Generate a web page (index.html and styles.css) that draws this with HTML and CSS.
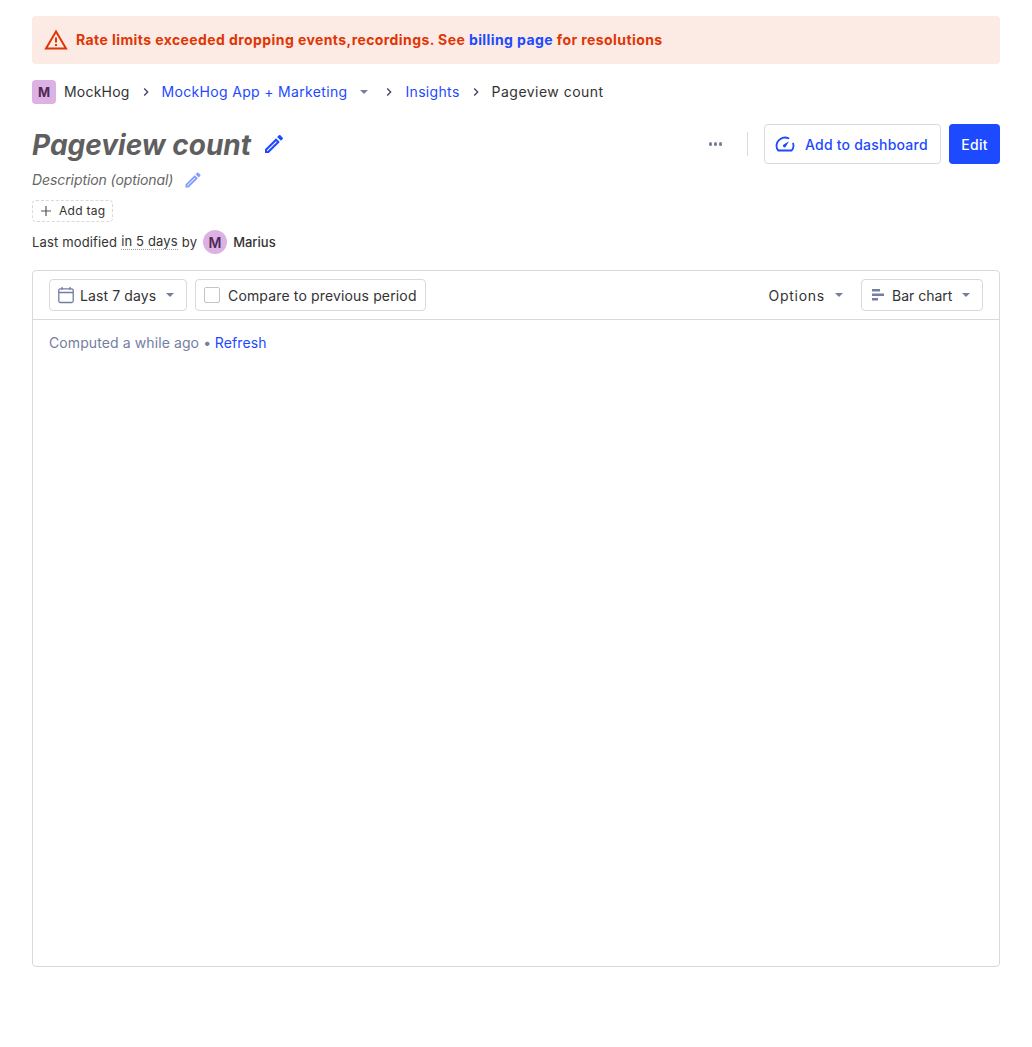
FILE: index.html
```html
<!DOCTYPE html>
<html lang="en">
<head>
    <meta charset="UTF-8">
    <meta name="viewport" content="width=device-width, initial-scale=1.0">
    <title>Pageview count</title>
    <link rel="stylesheet" href="styles.css">
</head>
<body>
    <div class="page">
        <div class="alert">
            <svg class="alert-icon" width="24" height="24" viewBox="0 0 24 24"><path d="M12 3.500 2 20.500h20z" fill="none" stroke="#e03505" stroke-width="2" stroke-linejoin="miter"/><path d="M12 9.500v5M12 16v2" fill="none" stroke="#e03505" stroke-width="2"/></svg>
            <span class="alert-text">Rate limits exceeded dropping events,recordings. See <a class="link" href="#">billing page</a> for resolutions</span>
        </div>

        <div class="breadcrumbs">
            <span class="org-badge">M</span>
            <span class="crumb crumb-org">MockHog</span>
            <svg class="chevron" width="16" height="16" viewBox="0 0 16 16"><path d="M6.200 4.500 9.700 8l-3.500 3.500" fill="none" stroke="#3b4263" stroke-width="1.300"/></svg>
            <a class="crumb link" href="#">MockHog App + Marketing</a>
            <span class="caret caret-crumb"></span>
            <svg class="chevron" width="16" height="16" viewBox="0 0 16 16"><path d="M6.200 4.500 9.700 8l-3.500 3.500" fill="none" stroke="#3b4263" stroke-width="1.300"/></svg>
            <a class="crumb link" href="#">Insights</a>
            <svg class="chevron" width="16" height="16" viewBox="0 0 16 16"><path d="M6.200 4.500 9.700 8l-3.500 3.500" fill="none" stroke="#3b4263" stroke-width="1.300"/></svg>
            <span class="crumb crumb-last">Pageview count</span>
        </div>

        <div class="title-row">
            <div class="title-left">
                <h1>Pageview count</h1>
                <svg class="edit-icon" width="24" height="24" viewBox="0 0 24 24"><path d="M3 17.250V21h3.750L17.810 9.940l-3.750-3.750zM20.710 7.040a1 1 0 0 0 0-1.410l-2.340-2.340a1 1 0 0 0-1.410 0l-1.830 1.830 3.750 3.750z" fill="#1d4aff"/><path d="M5 18.300 14.100 9.200l.7.700L5.700 19H5z" fill="#fff"/></svg>
            </div>
            <div class="title-actions">
                <span class="more-dots"><i></i><i></i><i></i></span>
                <span class="divider"></span>
                <button class="btn btn-outline">
                    <svg width="20" height="20" viewBox="0 0 20 20"><path d="M13.500 4.300A8.500 8.500 0 0 0 1.500 12c0 1.700.6 3.300 1.800 4.500h13.400a7.500 7.500 0 0 0 1.800-4.500c0-.9-.1-1.700-.4-2.500" fill="none" stroke="#1d4aff" stroke-width="1.800" stroke-linejoin="round" stroke-linecap="round"/><path d="M8.300 10.800 14 7.200l-3.300 5.600a1.500 1.500 0 1 1-2.400-2z" fill="#1d4aff"/></svg>
                    <span>Add to dashboard</span>
                </button>
                <button class="btn btn-primary">Edit</button>
            </div>
        </div>

        <div class="description">
            <span>Description (optional)</span>
            <svg class="edit-icon-small" width="20" height="20" viewBox="0 0 24 24"><path d="M3 17.250V21h3.750L17.810 9.940l-3.750-3.750zM20.710 7.040a1 1 0 0 0 0-1.410l-2.340-2.340a1 1 0 0 0-1.410 0l-1.830 1.830 3.750 3.750z" fill="#1d4aff"/><path d="M5 18.300 14.100 9.200l.7.700L5.700 19H5z" fill="#fff"/></svg>
        </div>

        <div class="tag-row">
            <span class="add-tag">
                <svg width="14" height="14" viewBox="0 0 14 14"><path d="M7 2v10M2 7h10" fill="none" stroke="#555" stroke-width="1.200"/></svg>
                <span>Add tag</span>
            </span>
        </div>

        <div class="modified">
            <span>Last modified</span>
            <span class="dotted">in 5 days</span>
            <span>by</span>
            <span class="avatar">M</span>
            <span class="author">Marius</span>
        </div>

        <div class="card">
            <div class="card-top">
                <div class="filters">
                    <div class="select select-date">
                        <svg width="18" height="18" viewBox="0 0 18 18"><rect x="1.800" y="2.800" width="14.400" height="13.700" rx="1.500" fill="none" stroke="#747ea1" stroke-width="1.300"/><path d="M1.800 6.500h14.400M5 1v3M13 1v3" fill="none" stroke="#747ea1" stroke-width="1.300"/></svg>
                        <span>Last 7 days</span>
                        <span class="caret"></span>
                    </div>
                    <label class="select select-compare">
                        <span class="checkbox"></span>
                        <span>Compare to previous period</span>
                    </label>
                </div>
                <div class="filters">
                    <div class="options">
                        <span>Options</span>
                        <span class="caret"></span>
                    </div>
                    <div class="select select-chart">
                        <svg width="16" height="16" viewBox="0 0 16 16"><path d="M2 2h8v2.500H2zM2 6.500h12V9H2zM2 11h6v2.500H2z" fill="#747ea1"/></svg>
                        <span>Bar chart</span>
                        <span class="caret"></span>
                    </div>
                </div>
            </div>
            <div class="card-body">
                <span class="computed">Computed a while ago</span>
                <span class="computed bullet">•</span>
                <a class="link" href="#">Refresh</a>
            </div>
        </div>
    </div>
</body>
</html>
```

FILE: styles.css
```css
* {
    box-sizing: border-box;
}

body {
    margin: 0;
    background-color: #fff;
    color: #333;
    font-family: Inter, "Liberation Sans", sans-serif;
    font-size: 14px;
}

.page {
    padding: 16px 32px 80px;
}

.link {
    color: #1d4aff;
    text-decoration: none;
}

.alert {
    display: flex;
    align-items: center;
    gap: 8px;
    height: 48px;
    padding: 0 12px;
    background-color: #fcebe4;
    border-radius: 4px;
    color: #e03505;
    font-weight: 700;
}

.alert-text {
    padding-bottom: 2px;
    letter-spacing: 0.415px;
}

.breadcrumbs {
    display: flex;
    align-items: center;
    height: 24px;
    margin-top: 16px;
}

.org-badge {
    display: flex;
    align-items: center;
    justify-content: center;
    width: 24px;
    height: 24px;
    border-radius: 4px;
    background-color: #dcb1e3;
    color: #4e2a58;
    font-size: 13px;
    font-weight: 700;
}

.crumb {
    padding-bottom: 2px;
    letter-spacing: 0.33px;
}

.crumb-org {
    margin-left: 8px;
    letter-spacing: 0.2px;
}

.crumb-last {
    letter-spacing: 0.47px;
}

.chevron {
    margin: 0 8px;
}

.caret {
    width: 0;
    height: 0;
    border-left: 4px solid transparent;
    border-right: 4px solid transparent;
    border-top: 4px solid #747ea1;
}

.caret-crumb {
    margin-left: 13px;
    margin-right: 5px;
}

.title-row {
    display: flex;
    justify-content: space-between;
    align-items: center;
    height: 40px;
    margin-top: 20px;
}

.title-left {
    display: flex;
    align-items: center;
    gap: 11px;
}

h1 {
    margin: 0;
    padding-top: 1px;
    color: #5f5f5f;
    font-size: 28px;
    font-style: italic;
    font-weight: 700;
    line-height: 40px;
}

.title-actions {
    display: flex;
    align-items: center;
}

.more-dots {
    display: flex;
    gap: 1.500px;
    margin-right: 25px;
}

.more-dots i {
    width: 3.500px;
    height: 3.500px;
    border-radius: 50%;
    background-color: #747ea1;
}

.divider {
    width: 1px;
    height: 24px;
    background-color: #d9d9d9;
    margin-right: 16px;
}

.btn {
    display: flex;
    align-items: center;
    height: 40px;
    border-radius: 4px;
    font-family: inherit;
    font-size: 14px;
    font-weight: 500;
    letter-spacing: 0.27px;
}

.btn-outline {
    gap: 10px;
    width: 177px;
    padding: 0 12px 0 10px;
    border: 1px solid #d9d9d9;
    background-color: #fff;
    color: #1d4aff;
    letter-spacing: 0.22px;
}

.btn-primary {
    justify-content: center;
    width: 51px;
    margin-left: 8px;
    border: none;
    background-color: #1d4aff;
    color: #fff;
}

.description {
    display: flex;
    align-items: center;
    gap: 10px;
    height: 20px;
    margin-top: 6px;
    color: #666;
    font-style: italic;
    letter-spacing: -0.09px;
}

.description span {
    padding-bottom: 2px;
}

.edit-icon-small {
    opacity: 0.55;
}

.tag-row {
    display: flex;
    margin-top: 10px;
}

.add-tag {
    display: flex;
    align-items: center;
    gap: 6px;
    height: 22px;
    padding: 0 6px;
    border: 1px dashed #d9d9d9;
    border-radius: 4px;
    font-size: 12px;
    letter-spacing: 0.3px;
}

.add-tag span {
    padding-bottom: 2px;
}

.modified {
    display: flex;
    align-items: center;
    gap: 4px;
    height: 24px;
    margin-top: 8px;
    font-size: 13px;
    letter-spacing: 0.15px;
}

.dotted {
    border-bottom: 1px dotted #999;
    line-height: 15px;
}

.avatar {
    display: flex;
    align-items: center;
    justify-content: center;
    width: 24px;
    height: 24px;
    margin: 0 2px;
    border-radius: 50%;
    background-color: #dcb1e3;
    color: #4e2a58;
    font-size: 14px;
    font-weight: 600;
}

.author {
    font-weight: 500;
    letter-spacing: 0;
}

.card {
    height: 697px;
    margin-top: 16px;
    border: 1px solid #d9d9d9;
    border-radius: 4px;
}

.card-top {
    display: flex;
    justify-content: space-between;
    align-items: center;
    height: 49px;
    padding: 0 16px;
    border-bottom: 1px solid #d9d9d9;
}

.filters {
    display: flex;
    align-items: center;
    gap: 8px;
}

.select {
    display: flex;
    align-items: center;
    height: 32px;
    padding: 0 8px;
    border: 1px solid #d9d9d9;
    border-radius: 4px;
}

.select-date {
    width: 138px;
    gap: 5px;
    padding-left: 7px;
    letter-spacing: 0.1px;
}

.select-date .caret {
    margin-left: 5px;
}

.select-compare {
    gap: 8px;
    letter-spacing: 0.15px;
}

.select-chart {
    width: 122px;
    gap: 6px;
}

.select-chart .caret {
    margin-left: 4px;
}

.checkbox {
    width: 16px;
    height: 16px;
    border: 1px solid #c4c4c4;
    border-radius: 2px;
}

.options {
    display: flex;
    align-items: center;
    gap: 10px;
    margin-right: 10px;
    font-weight: 400;
    letter-spacing: 0.75px;
}

.card-body {
    padding: 14px 16px;
    line-height: 17px;
    letter-spacing: 0.1px;
}

.computed {
    color: #747ea1;
}

.bullet {
    margin-right: -0.4px;
}
```
